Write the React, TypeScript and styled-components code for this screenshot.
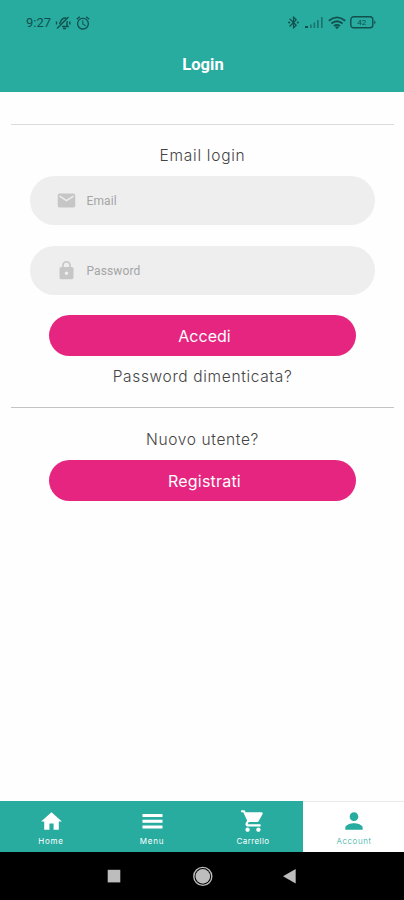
import React from "react";
import styled, { createGlobalStyle } from "styled-components";
import {
  MdAlarm,
  MdBluetoothConnected,
  MdEmail,
  MdHome,
  MdLock,
  MdPerson,
  MdShoppingCart,
} from "react-icons/md";

const teal = "#28aca0";
const pink = "#e5257f";

const GlobalStyle = createGlobalStyle`
  * { box-sizing: border-box; }
  body { margin: 0; background: #fff; }
  button, input { font: inherit; border: 0; padding: 0; }
`;

const Screen = styled.div`
  display: flex;
  flex-direction: column;
  width: 404px;
  height: 900px;
  overflow: hidden;
  background: #fefefe;
  font-family: Inter, "Open Sans", sans-serif;
`;

const Header = styled.header`
  height: 92px;
  flex: none;
  background: ${teal};
`;

const StatusBar = styled.div`
  display: flex;
  align-items: center;
  justify-content: space-between;
  height: 45px;
  padding: 0 27px 0 26px;
  color: #12504e;
  font: 13px/1 Roboto, sans-serif;
  svg { display: block; }
`;

const StatusGroup = styled.div<{ $gap: number }>`
  display: flex;
  align-items: center;
  gap: ${(p) => p.$gap}px;
`;

const Clock = styled.span`
  width: 25px;
  white-space: nowrap;
`;

const Title = styled.h1`
  margin: 0;
  padding-left: 2px;
  text-align: center;
  color: #fff;
  font: 700 16.5px/40px Roboto, sans-serif;
`;

const Content = styled.main`
  flex: 1;
  display: flex;
  flex-direction: column;
  align-items: center;
  padding-top: 32px;
`;

const Divider = styled.hr<{ $color: string }>`
  width: 383px;
  height: 1px;
  flex: none;
  margin: 0;
  border: 0;
  background: ${(p) => p.$color};
`;

const Label = styled.div<{ $top: number; $bottom: number; $spacing?: number }>`
  margin: ${(p) => p.$top}px 0 ${(p) => p.$bottom}px;
  height: 20px;
  padding-left: 1px;
  color: #444;
  font-size: 15.5px;
  font-weight: 300;
  line-height: 20px;
  letter-spacing: ${(p) => p.$spacing ?? 0}px;
`;

const Field = styled.label<{ $gap: number }>`
  display: flex;
  align-items: center;
  width: 345px;
  height: 49px;
  margin: 0 0 ${(p) => p.$gap}px 1px;
  padding-left: 25.5px;
  border-radius: 25px;
  background: #eee;
  color: #c6c6c6;
  svg { flex: none; }
`;

const Input = styled.input`
  width: 240px;
  margin-left: 10px;
  outline: 0;
  background: transparent;
  font: 12px/16px Roboto, sans-serif;
  letter-spacing: 0.1px;
  &::placeholder { color: #a5a5a5; opacity: 1; }
`;

const Button = styled.button<{ $spacing: number }>`
  width: 307px;
  height: 41px;
  flex: none;
  margin-left: 1px;
  padding: 1px 0 0 4px;
  border-radius: 21px;
  background: ${pink};
  color: #fff;
  font-size: 16px;
  font-weight: 400;
  line-height: 40px;
  letter-spacing: ${(p) => p.$spacing}px;
`;

const TabBar = styled.nav`
  display: grid;
  grid-template-columns: repeat(4, 1fr);
  height: 51px;
  flex: none;
`;

const Tab = styled.button<{ $active?: boolean }>`
  display: flex;
  flex-direction: column;
  align-items: center;
  padding-top: 6px;
  border-top: 1px solid ${(p) => (p.$active ? "#e8eaea" : teal)};
  background: ${(p) => (p.$active ? "#fff" : teal)};
  color: ${(p) => (p.$active ? teal : "#fff")};
`;

const TabIcon = styled.span`
  display: flex;
  align-items: center;
  justify-content: center;
  height: 26px;
  padding-left: 1px;
`;

const TabLabel = styled.span<{ $spacing: number; $light?: boolean }>`
  margin-top: 1px;
  padding-left: 1px;
  font-size: 8px;
  font-weight: ${(p) => (p.$light ? 300 : 400)};
  line-height: 12px;
  letter-spacing: ${(p) => p.$spacing}px;
`;

const SystemNav = styled.footer`
  display: flex;
  align-items: center;
  height: 48px;
  flex: none;
  padding-left: 107px;
  background: #000;
  svg { display: block; }
`;

const MutedBell = () => (
  <svg width="17" height="14" viewBox="0 0 17 14" fill="none" stroke="currentColor" strokeWidth="1.4">
    <path d="M2 12.5 13.5 1M4.5 7.8 6.5 4Q8.5 1.5 11.2 2.2M12.3 5 11.8 8.5 13 10.5H7M8 12.5h3M1.5 5.5v3M14.8 5.5v3" />
  </svg>
);

const Signal = () => (
  <svg width="19" height="13" viewBox="0 0 19 13" fill="currentColor">
    <path d="M0 10h3v2H0z" />
    <path opacity=".6" d="M5 8.5h1.7V12H5zM8.5 6.5h1.7V12H8.5zM12 4h1.7v8H12zM16 1h1.7v11H16z" />
  </svg>
);

const Wifi = () => (
  <svg width="18" height="14" viewBox="0 0 18 14" fill="none" stroke="currentColor" strokeWidth="1.8">
    <path d="M.8 4.7Q9-2 17.2 4.7M3.4 7.5q5.6-4.6 11.2 0M6 10q3-2.3 6 0" />
    <path d="m7 11 2 2.3 2-2.3q-2-1.5-4 0Z" fill="currentColor" stroke="none" />
  </svg>
);

const Battery = () => (
  <svg width="27" height="13" viewBox="0 0 27 13">
    <rect x=".8" y=".8" width="22" height="11" rx="2.8" fill="none" stroke="currentColor" strokeWidth="1.4" />
    <path d="M24.3 4.2q2.5 2.2 0 4.4z" fill="currentColor" />
    <text x="11.8" y="9.3" textAnchor="middle" fontFamily="Roboto" fontSize="8" fill="currentColor">42</text>
  </svg>
);

const MenuBars = () => (
  <svg width="21" height="15" viewBox="0 0 21 15" fill="currentColor">
    <path d="M.5 0h20v3H.5zM.5 5.7h20v3H.5zM.5 11.4h20v3H.5z" />
  </svg>
);

const SystemButtons = () => (
  <svg width="190" height="24" viewBox="0 0 190 24" fill="#bdbdbd">
    <rect x=".7" y="5.8" width="12.6" height="12.6" />
    <circle cx="95.8" cy="12.4" r="7.3" />
    <circle cx="95.8" cy="12.4" r="9" fill="none" stroke="#bdbdbd" strokeWidth="1.4" />
    <path d="M176 12.2 188.7 5v14.5z" />
  </svg>
);

const tabs = [
  { label: "Home", icon: <MdHome size={25} />, spacing: 0.8 },
  { label: "Menu", icon: <MenuBars />, spacing: 0.8 },
  { label: "Carrello", icon: <MdShoppingCart size={26} />, spacing: 0.4 },
  { label: "Account", icon: <MdPerson size={26} />, spacing: 0.6, active: true },
];

export default function App() {
  return (
    <>
      <GlobalStyle />
      <Screen>
        <Header>
          <StatusBar>
            <StatusGroup $gap={3.5}>
              <Clock>9:27</Clock>
              <MutedBell />
              <MdAlarm size={16} />
            </StatusGroup>
            <StatusGroup $gap={4}>
              <MdBluetoothConnected size={15} />
              <Signal />
              <Wifi />
              <Battery />
            </StatusGroup>
          </StatusBar>
          <Title>Login</Title>
        </Header>
        <Content>
          <Divider $color="#dcdcdc" />
          <Label $top={21} $bottom={10} $spacing={0.75}>Email login</Label>
          <Field $gap={21}>
            <MdEmail size={21} />
            <Input type="email" placeholder="Email" />
          </Field>
          <Field $gap={20}>
            <MdLock size={21} />
            <Input type="password" placeholder="Password" />
          </Field>
          <Button $spacing={0}>Accedi</Button>
          <Label $top={11} $bottom={20} $spacing={0.65}>Password dimenticata?</Label>
          <Divider $color="#c4c4c4" />
          <Label $top={22} $bottom={10} $spacing={0.65}>Nuovo utente?</Label>
          <Button $spacing={0.2}>Registrati</Button>
        </Content>
        <TabBar>
          {tabs.map((t) => (
            <Tab key={t.label} $active={t.active}>
              <TabIcon>{t.icon}</TabIcon>
              <TabLabel $spacing={t.spacing} $light={t.active}>{t.label}</TabLabel>
            </Tab>
          ))}
        </TabBar>
        <SystemNav>
          <SystemButtons />
        </SystemNav>
      </Screen>
    </>
  );
}
